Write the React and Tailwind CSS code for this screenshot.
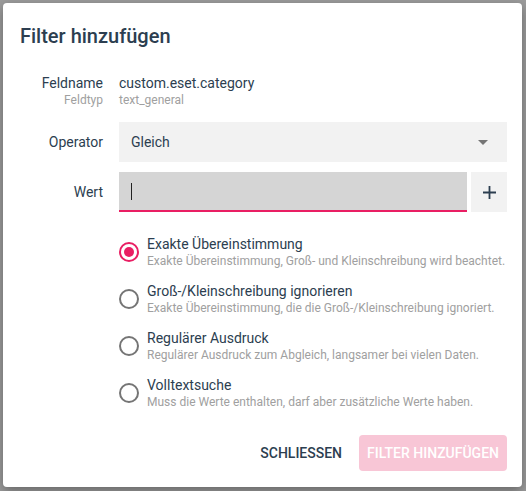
import React, { useState } from "react";

const options = [
  {
    id: "exact",
    title: "Exakte Übereinstimmung",
    text: "Exakte Übereinstimmung, Groß- und Kleinschreibung wird beachtet.",
  },
  {
    id: "ignorecase",
    title: "Groß-/Kleinschreibung ignorieren",
    text: "Exakte Übereinstimmung, die die Groß-/Kleinschreibung ignoriert.",
  },
  {
    id: "regex",
    title: "Regulärer Ausdruck",
    text: "Regulärer Ausdruck zum Abgleich, langsamer bei vielen Daten.",
  },
  {
    id: "fulltext",
    title: "Volltextsuche",
    text: "Muss die Werte enthalten, darf aber zusätzliche Werte haben.",
  },
];

const Radio = ({ checked }) => (
  <span
    className={`mt-2 flex h-5 w-5 shrink-0 items-center justify-center rounded-full border-2 ${
      checked ? "border-[#e91e63]" : "border-[#757575]"
    }`}
  >
    {checked && <span className="h-2.5 w-2.5 rounded-full bg-[#e91e63]" />}
  </span>
);

const App = () => {
  const [mode, setMode] = useState("exact");

  return (
    <div
      className="h-[491px] w-full overflow-hidden bg-[#9c9c9c] pl-[3px] pt-[3px]"
      style={{ fontFamily: "Roboto, 'Liberation Sans', sans-serif" }}
    >
      <div className="flex h-[484px] w-[519px] flex-col rounded bg-white pb-4 pl-4 pr-[15px] pt-[19px] text-[#2c3e50] shadow-[0_4px_12px_rgba(0,0,0,0.35)]">
        {/* Header */}
        <h2 className="pl-px text-[20px] font-medium leading-7">
          Filter hinzufügen
        </h2>

        {/* Field info */}
        <div className="mt-[23px] flex">
          <div className="w-[84px] shrink-0 text-right">
            <p className="text-[14px] leading-5">Feldname</p>
            <p className="-mt-px text-[12px] leading-4 text-[#a0a0a0]">
              Feldtyp
            </p>
          </div>
          <div className="ml-4">
            <p className="text-[14px] leading-5">custom.eset.category</p>
            <p className="-mt-px text-[12px] leading-4 text-[#a0a0a0]">
              text_general
            </p>
          </div>
        </div>

        {/* Operator */}
        <div className="mt-[14px] flex items-center">
          <label className="w-[84px] shrink-0 text-right text-[14px] leading-5">
            Operator
          </label>
          <div className="ml-4 flex h-10 flex-1 items-center justify-between bg-[#f2f2f2] pl-3 pr-[19px] text-[14px]">
            <span>Gleich</span>
            <svg width="10" height="5" viewBox="0 0 10 5">
              <path d="M0 0h10L5 5z" fill="#757575" />
            </svg>
          </div>
        </div>

        {/* Wert */}
        <div className="mt-[10px] flex items-center">
          <label className="w-[84px] shrink-0 text-right text-[14px] leading-5">
            Wert
          </label>
          <div className="ml-4 flex h-10 flex-1 items-center border-b-2 border-[#e91e63] bg-[#d5d5d5] pl-3">
            <span className="h-[17px] w-px bg-[#222]" />
          </div>
          <button className="ml-1 flex h-10 w-9 items-center justify-center bg-[#f2f2f2]">
            <svg width="13" height="13" viewBox="0 0 13 13">
              <path
                d="M6.5 0v13M0 6.5h13"
                stroke="#2c3e50"
                strokeWidth="1.8"
              />
            </svg>
          </button>
        </div>

        {/* Match mode */}
        <div className="ml-[100px] mt-[22px] flex flex-col gap-3">
          {options.map((o) => (
            <label
              key={o.id}
              className="flex cursor-pointer gap-2"
              onClick={() => setMode(o.id)}
            >
              <Radio checked={mode === o.id} />
              <span className="flex flex-col">
                <span className="text-[14px] leading-5">{o.title}</span>
                <span className="-mt-px text-[12px] leading-4 text-[#a0a0a0]">
                  {o.text}
                </span>
              </span>
            </label>
          ))}
        </div>

        {/* Actions */}
        <div className="mt-auto flex justify-end gap-[9px]">
          <button className="h-9 rounded px-2 text-[14px] font-medium uppercase">
            Schliessen
          </button>
          <button
            disabled
            className="h-9 rounded bg-[#f8c6d6] px-2 text-[14px] font-medium uppercase text-white"
          >
            Filter hinzufügen
          </button>
        </div>
      </div>
    </div>
  );
};

export default App;
